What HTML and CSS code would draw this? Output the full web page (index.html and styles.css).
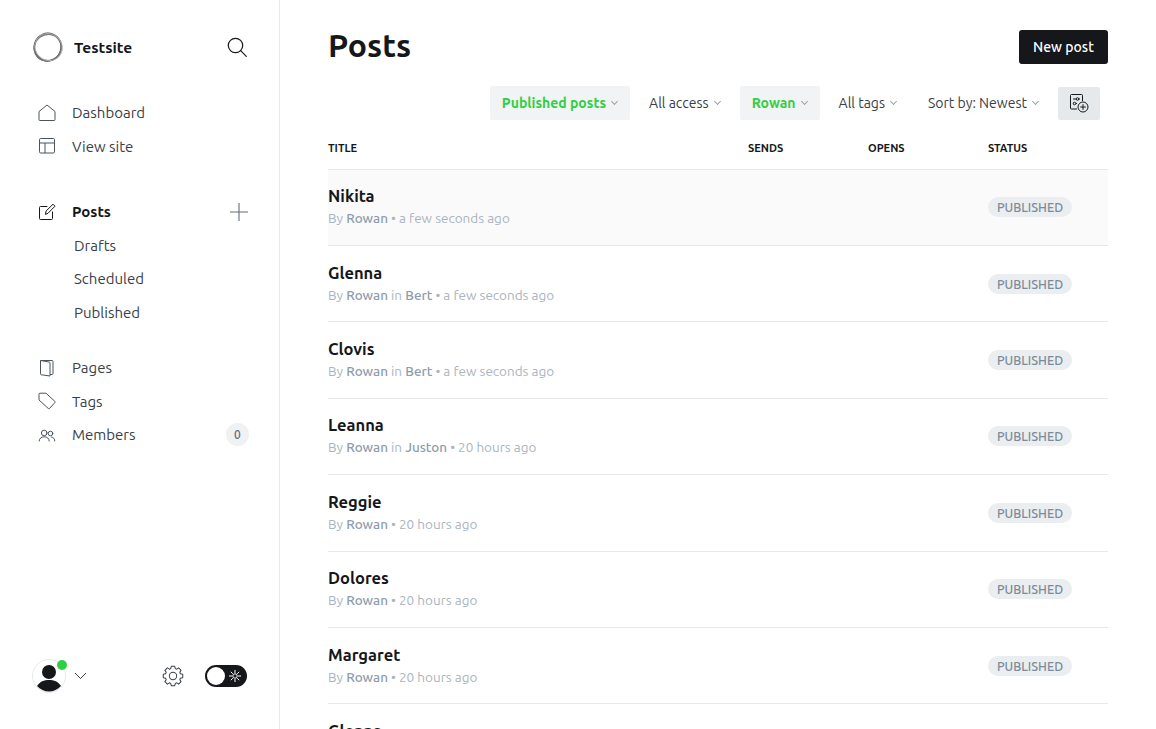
FILE: index.html
```html
<!DOCTYPE html>
<html lang="en">
<head>
  <meta charset="UTF-8"/>
  <title>Posts - Testsite</title>
  <link rel="stylesheet" href="styles.css">
</head>
<body>
  <div class="app">
    <aside class="sidebar">
      <div class="brand">
        <svg class="logo" width="32" height="32" viewBox="0 0 32 32" fill="none">
          <ellipse cx="15.800" cy="16.200" rx="13.400" ry="13.800" stroke="#444" stroke-width="1.600" transform="rotate(20 16 16)"/>
          <ellipse cx="15.400" cy="16.400" rx="13.800" ry="13" stroke="#777" stroke-width="1.200" transform="rotate(-35 16 16)"/>
          <ellipse cx="16.400" cy="15.600" rx="14" ry="13.200" stroke="#aaa" stroke-width="1" transform="rotate(40 16 16)"/>
        </svg>
        <span class="brand-name">Testsite</span>
        <svg class="search" width="20" height="20" viewBox="0 0 20 20" fill="none" stroke="#15171a" stroke-width="1.2">
          <circle cx="8.5" cy="8.5" r="7.2"/>
          <path d="M13.7 13.7l5.6 5.6" stroke-linecap="round"/>
        </svg>
      </div>

      <nav class="nav">
        <ul class="nav-group">
          <li class="nav-item">
            <svg width="18" height="18" viewBox="0 0 18 18" fill="none" stroke="#4b545d" stroke-width="1" stroke-linejoin="round"><path d="M1 7.500L9 1l8 6.500v8.200a.8.8 0 0 1-.8.8H1.800a.8.8 0 0 1-.8-.8z"/></svg>
            Dashboard
          </li>
          <li class="nav-item">
            <svg width="18" height="18" viewBox="0 0 18 18" fill="none" stroke="#4b545d" stroke-width="1"><rect x="1.500" y="1.500" width="15" height="14.500" rx="1.200"/><path d="M1.500 6h15M7 6v10"/></svg>
            View site
          </li>
        </ul>

        <ul class="nav-group posts-group">
          <li class="nav-item current">
            <svg width="18" height="18" viewBox="0 0 18 18" fill="none" stroke="#15171a" stroke-width="1" stroke-linejoin="round" stroke-linecap="round"><path d="M9 3.500H2.500a1 1 0 0 0-1 1v11a1 1 0 0 0 1 1h11a1 1 0 0 0 1-1V9"/><path d="M7.500 11l.6-3L15 1.200l2 2L10.300 10z"/></svg>
            Posts
            <svg class="plus" width="18" height="18" viewBox="0 0 18 18" fill="none" stroke="#626d79" stroke-width="1.100"><path d="M9 0v18M0 9h18"/></svg>
          </li>
          <li class="nav-sub">Drafts</li>
          <li class="nav-sub">Scheduled</li>
          <li class="nav-sub">Published</li>
        </ul>

        <ul class="nav-group">
          <li class="nav-item">
            <svg width="18" height="18" viewBox="0 0 18 18" fill="none" stroke="#4b545d" stroke-width="1" stroke-linejoin="round"><path d="M2.500 1.500h11.500a1 1 0 0 1 1 1v12a1 1 0 0 1-1 1h-2"/><path d="M2.500 1.500l8.500 1.500a1 1 0 0 1 1 1V17l-8.500-1.200a1 1 0 0 1-1-1z"/></svg>
            Pages
          </li>
          <li class="nav-item">
            <svg width="18" height="18" viewBox="0 0 18 18" fill="none" stroke="#4b545d" stroke-width="1" stroke-linejoin="round"><path d="M1 2.200a1 1 0 0 1 1-1h6l8.800 8.100a1 1 0 0 1 0 1.400l-5.200 5.700a1 1 0 0 1-1.400 0L1 8z"/></svg>
            Tags
          </li>
          <li class="nav-item">
            <svg width="18" height="18" viewBox="0 0 18 18" fill="none" stroke="#4b545d" stroke-width="1" stroke-linecap="round"><circle cx="6.200" cy="7" r="2.800"/><path d="M1.200 15c0-2.600 2.200-4.200 5-4.200s5 1.600 5 4.200"/><circle cx="12.500" cy="7.500" r="2.300"/><path d="M13.500 11c2 .3 3.300 1.800 3.300 4"/></svg>
            Members
            <span class="count">0</span>
          </li>
        </ul>
      </nav>

      <div class="side-foot">
        <div class="avatar">
          <svg width="34" height="34" viewBox="0 0 34 34"><circle cx="17" cy="17" r="16.500" fill="#fff" stroke="#e6e9eb"/><circle cx="17" cy="13" r="7" fill="#15171a"/><path d="M5 27c3-4.500 7-6 12-6s9 1.500 12 6c-3 3.500-7.500 5.500-12 5.500S8 30.500 5 27z" fill="#15171a"/></svg>
          <span class="online"></span>
        </div>
        <svg class="avatar-arrow" width="13" height="8" viewBox="0 0 13 8" fill="none" stroke="#394047" stroke-width="1"><path d="M1 1l5.500 5.500L12 1"/></svg>
        <svg class="gear" width="22" height="22" viewBox="0 0 24 24" fill="none" stroke="#394047" stroke-width="1.100" stroke-linejoin="round"><circle cx="12" cy="12" r="4"/><polygon points="9.540,3.970 10.120,1.360 13.880,1.360 14.460,3.970 15.940,4.580 18.190,3.150 20.850,5.810 19.420,8.060 20.030,9.540 22.640,10.120 22.640,13.880 20.030,14.460 19.420,15.940 20.850,18.190 18.190,20.850 15.940,19.420 14.460,20.030 13.880,22.640 10.120,22.640 9.540,20.030 8.060,19.420 5.810,20.850 3.150,18.190 4.580,15.940 3.970,14.460 1.360,13.880 1.360,10.120 3.970,9.540 4.580,8.060 3.150,5.810 5.810,3.150 8.060,4.580"/></svg>
        <div class="toggle">
          <span class="knob"></span>
          <svg width="12" height="12" viewBox="0 0 12 12" stroke="#fff" stroke-width="1"><circle cx="6" cy="6" r="2.200" fill="none"/><path d="M6 0v3M6 9v3M0 6h3M9 6h3M1.800 1.800l2 2M8.200 8.200l2 2M1.800 10.200l2-2M8.200 3.800l2-2"/></svg>
        </div>
      </div>
    </aside>

    <main class="main">
      <header class="page-head">
        <h1>Posts</h1>
        <button class="new-post">New post</button>
      </header>

      <div class="filters">
        <div class="filter active">Published posts<i class="caret"></i></div>
        <div class="filter">All access<i class="caret"></i></div>
        <div class="filter active">Rowan<i class="caret"></i></div>
        <div class="filter">All tags<i class="caret"></i></div>
        <div class="filter">Sort by: Newest<i class="caret"></i></div>
        <button class="filter-icon">
          <svg width="20" height="20" viewBox="0 0 20 20" fill="none" stroke="#15171a" stroke-width="1"><path d="M8 16H2.500a1 1 0 0 1-1-1V2.500a1 1 0 0 1 1-1h10a1 1 0 0 1 1 1V8"/><path d="M4 6h7M4 10.500h4"/><circle cx="8.500" cy="6" r="1.300" fill="#e6e9eb"/><circle cx="5.500" cy="10.500" r="1.300" fill="#e6e9eb"/><circle cx="14" cy="14" r="5"/><path d="M14 11.200v5.600M11.200 14h5.600"/></svg>
        </button>
      </div>

      <div class="post-table">
        <div class="post-head">
          <span>Title</span>
          <span>Sends</span>
          <span>Opens</span>
          <span>Status</span>
        </div>

        <div class="post-row hover">
          <div><div class="post-title">Nikita</div><p class="post-meta">By <b>Rowan</b> • a few seconds ago</p></div>
          <span class="badge">Published</span>
        </div>
        <div class="post-row">
          <div><div class="post-title">Glenna</div><p class="post-meta">By <b>Rowan</b> in <b>Bert</b> • a few seconds ago</p></div>
          <span class="badge">Published</span>
        </div>
        <div class="post-row">
          <div><div class="post-title">Clovis</div><p class="post-meta">By <b>Rowan</b> in <b>Bert</b> • a few seconds ago</p></div>
          <span class="badge">Published</span>
        </div>
        <div class="post-row">
          <div><div class="post-title">Leanna</div><p class="post-meta">By <b>Rowan</b> in <b>Juston</b> • 20 hours ago</p></div>
          <span class="badge">Published</span>
        </div>
        <div class="post-row">
          <div><div class="post-title">Reggie</div><p class="post-meta">By <b>Rowan</b> • 20 hours ago</p></div>
          <span class="badge">Published</span>
        </div>
        <div class="post-row">
          <div><div class="post-title">Dolores</div><p class="post-meta">By <b>Rowan</b> • 20 hours ago</p></div>
          <span class="badge">Published</span>
        </div>
        <div class="post-row">
          <div><div class="post-title">Margaret</div><p class="post-meta">By <b>Rowan</b> • 20 hours ago</p></div>
          <span class="badge">Published</span>
        </div>
        <div class="post-row">
          <div><div class="post-title">Glenna</div><p class="post-meta">By <b>Rowan</b> • 20 hours ago</p></div>
          <span class="badge">Published</span>
        </div>
      </div>
    </main>
  </div>
</body>
</html>
```

FILE: styles.css
```css
* {
  box-sizing: border-box;
}
html, body {
  height: 100%;
  margin: 0;
  overflow: hidden;
}
body {
  background-color: #fff;
  color: #15171a;
  font-family: Ubuntu, "Noto Sans", "Open Sans", sans-serif;
  font-size: 14px;
}
ul {
  list-style: none;
  margin: 0;
  padding: 0;
}
.app {
  display: flex;
  height: 729px;
}

/* sidebar */
.sidebar {
  width: 280px;
  flex: none;
  border-right: 1px solid #e6e9eb;
  padding: 31px 31px 0 32px;
  display: flex;
  flex-direction: column;
}
.brand {
  display: flex;
  align-items: center;
  height: 32px;
}
.brand-name {
  margin-left: 10px;
  font-size: 15.5px;
  font-weight: 700;
}
.search {
  margin-left: auto;
  margin-right: 1px;
}
.nav {
  margin-top: 33px;
}
.nav-group {
  margin-bottom: 32px;
}
.posts-group {
  margin-bottom: 22px;
}
.nav-item {
  display: flex;
  align-items: center;
  height: 33.5px;
  padding-left: 6px;
  color: #394047;
  font-size: 15px;
}
.nav-item svg:first-child {
  margin-right: 16px;
}
.nav-item.current {
  color: #15171a;
  font-weight: 700;
}
.plus {
  margin-left: auto;
}
.nav-sub {
  height: 33.5px;
  line-height: 33.5px;
  padding-left: 42px;
  color: #394047;
  font-size: 15px;
}
.count {
  margin-left: auto;
  margin-right: -1px;
  width: 23px;
  height: 23px;
  border-radius: 50%;
  background-color: #eff1f2;
  color: #626d79;
  font-size: 12px;
  font-weight: 500;
  line-height: 23px;
  text-align: center;
}
.side-foot {
  margin-top: auto;
  margin-bottom: 36px;
  padding-right: 1px;
  display: flex;
  align-items: center;
}
.avatar {
  position: relative;
  width: 34px;
  height: 34px;
}
.avatar svg {
  display: block;
}
.online {
  position: absolute;
  top: 1px;
  right: -1px;
  width: 10px;
  height: 10px;
  border-radius: 50%;
  background-color: #30cf43;
}
.avatar-arrow {
  margin-left: 8px;
}
.gear {
  margin-left: auto;
  margin-right: 21px;
}
.toggle {
  width: 42px;
  height: 22px;
  border-radius: 11px;
  background-color: #15171a;
  display: flex;
  align-items: center;
  justify-content: space-between;
  padding: 0 6px 0 2px;
}
.knob {
  width: 18px;
  height: 18px;
  border-radius: 50%;
  background-color: #fff;
}

/* main */
.main {
  flex: 1;
  padding: 30px 48px 0;
  min-width: 0;
}
.page-head {
  display: flex;
  justify-content: space-between;
  align-items: center;
  height: 34px;
}
h1 {
  margin: 0 0 4px;
  font-size: 32px;
  font-weight: 700;
  line-height: 34px;
}
.new-post {
  width: 89px;
  height: 34px;
  border: none;
  border-radius: 3px;
  background-color: #15171a;
  color: #fff;
  font: inherit;
  font-size: 14px;
  font-weight: 500;
}
.filters {
  display: flex;
  justify-content: flex-end;
  align-items: center;
  gap: 7px;
  margin-top: 22px;
  padding-right: 8px;
}
.filter {
  display: flex;
  align-items: center;
  height: 34px;
  padding: 0 12px;
  border-radius: 2px;
  color: #394047;
  font-size: 14px;
  white-space: pre;
}
.filter.active {
  background-color: #f1f3f4;
  color: #30cf43;
  font-weight: 700;
}
.caret {
  width: 5px;
  height: 5px;
  margin: -3px 1px 0 6px;
  border-right: 1px solid #99a3ad;
  border-bottom: 1px solid #99a3ad;
  transform: rotate(45deg);
}
.filter-icon {
  display: flex;
  align-items: center;
  justify-content: center;
  width: 42px;
  height: 33px;
  padding: 0;
  border: none;
  border-radius: 2px;
  background-color: #e6e9eb;
}
.post-table {
  margin-top: 11px;
}
.post-head,
.post-row {
  display: grid;
  grid-template-columns: 660px 120px;
}
.post-head {
  grid-template-columns: 420px 120px 120px 120px;
  height: 38.6px;
  padding-bottom: 4px;
  align-items: center;
  border-bottom: 1px solid #e6e9eb;
  font-size: 11px;
  font-weight: 700;
  text-transform: uppercase;
}
.post-row {
  height: 76.4px;
  align-items: center;
  border-bottom: 1px solid #e6e9eb;
}
.post-row.hover {
  background-color: #fafafb;
}
.post-title {
  font-size: 16.5px;
  font-weight: 700;
  line-height: 20px;
}
.post-meta {
  margin: 2px 0 0;
  color: #abb4be;
  font-size: 13.5px;
  line-height: 20px;
}
.post-meta b {
  color: #8e9cac;
  font-weight: 500;
}
.badge {
  justify-self: start;
  height: 20px;
  width: 84px;
  border-radius: 10px;
  background-color: #ebeef0;
  color: #7c8b9a;
  font-size: 12.5px;
  font-weight: 500;
  line-height: 20px;
  text-align: center;
  text-transform: uppercase;
}
```
